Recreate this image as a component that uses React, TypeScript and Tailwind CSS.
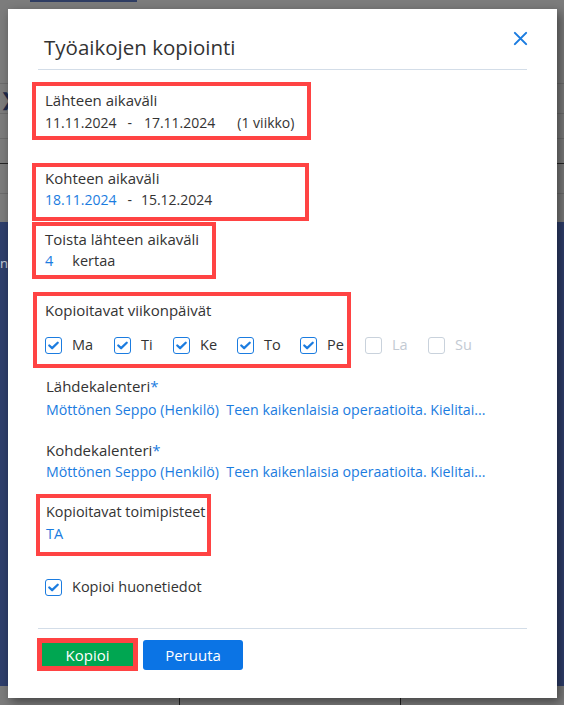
import React from 'react';

const font = "font-['Open_Sans',sans-serif]";

interface DayProps {
  label: string;
  checked: boolean;
  width: string;
}

const Check: React.FC<{ checked: boolean; disabled?: boolean }> = ({ checked, disabled }) => (
  <span
    className={`w-[17px] h-[17px] shrink-0 rounded-[3px] border-[1.5px] flex items-center justify-center bg-white ${
      disabled ? 'border-[#c9d2dc]' : 'border-[#1b7ce0]'
    }`}
  >
    {checked && (
      <svg viewBox="0 0 16 16" className="w-[13px] h-[13px]">
        <path d="M2.8 8 L6.3 11.3 L13.2 4.6" fill="none" stroke="#1b7ce0" strokeWidth="2.8" strokeLinecap="round" strokeLinejoin="round" />
      </svg>
    )}
  </span>
);

const Day: React.FC<DayProps> = ({ label, checked, width }) => (
  <label className={`flex items-center gap-[10px] ${width}`}>
    <Check checked={checked} disabled={!checked} />
    <span className={checked ? 'text-[#333]' : 'text-[#c3cad3]'}>{label}</span>
  </label>
);

// red outline used to highlight fields
const Marked: React.FC<{ className: string; children: React.ReactNode }> = ({ className, children }) => (
  <div className={`border-[4px] border-[#ff4343] box-border ${className}`}>{children}</div>
);

const Label: React.FC<{ children: React.ReactNode; className?: string }> = ({ children, className }) => (
  <div className={`whitespace-nowrap ${className ?? 'text-[15px]'}`}>{children}</div>
);

const App: React.FC = () => {
  const days: DayProps[] = [
    { label: 'Ma', checked: true, width: 'w-[69px]' },
    { label: 'Ti', checked: true, width: 'w-[59px]' },
    { label: 'Ke', checked: true, width: 'w-[64px]' },
    { label: 'To', checked: true, width: 'w-[63px]' },
    { label: 'Pe', checked: true, width: 'w-[65px]' },
    { label: 'La', checked: false, width: 'w-[63px]' },
    { label: 'Su', checked: false, width: 'w-[50px]' },
  ];

  return (
    <div className={`relative w-[564px] h-[705px] overflow-hidden bg-[#7c7c7c] ${font}`}>
      {/* dimmed page behind the dialog */}
      <div className="flex flex-col h-full">
        <div className="relative h-[222px]">
          <div className="ml-[30px] w-[107px] h-[2px] bg-[#2f3d63]" />
          <div className="mt-[81px] h-px bg-[#6c6c6c]" />
          <div className="mt-[29px] h-px bg-[#6c6c6c]" />
          <div className="mt-[24px] h-px bg-[#6c6c6c]" />
          <div className="mt-[24px] h-px bg-[#262626]" />
          <div className="mt-[29px] h-px bg-[#6c6c6c]" />
          <span className="absolute left-[0px] top-[86px] text-[18px] text-[#1e2a4a]">❯</span>
        </div>
        <div className="relative h-[464px] bg-[#2f3f6c]">
          <span className="absolute left-[0px] top-[32px] text-[13px] text-[#c6cad6]">ne</span>
        </div>
        <div className="flex-1 flex">
          <div className="ml-[179px] w-px bg-[#222]" />
          <div className="ml-[220px] w-px bg-[#222]" />
        </div>
      </div>

      {/* dialog */}
      <div className="absolute left-[8px] top-[9px] w-[549px] h-[689px] bg-white shadow-[3px_4px_10px_rgba(0,0,0,0.45)] text-[14.2px] leading-[20px] text-[#333]">
        <div className="flex items-center justify-between pl-[36px] pr-[29px] pt-[15px] h-[60px]">
          <h2 className="text-[20.5px] leading-[28px] text-[#333]">Työaikojen kopiointi</h2>
          <svg viewBox="0 0 16 16" className="w-[15px] h-[15px] mb-[17px]">
            <path d="M2 2 L14 14 M14 2 L2 14" stroke="#1b7ce0" strokeWidth="2.2" strokeLinecap="round" />
          </svg>
        </div>
        <div className="mx-[30px] h-px bg-[#d3dde8]" />

        <div className="pl-[24px] pr-[30px]">
          <Marked className="mt-[12px] w-[279px] h-[58px] pt-[4px] pl-[9px]">
            <Label>Lähteen aikaväli</Label>
            <div className="mt-[3px] flex text-[14px]">
              <span>11.11.2024</span>
              <span className="ml-[11px]">-</span>
              <span className="ml-[12px]">17.11.2024</span>
              <span className="ml-[22px]">(1 viikko)</span>
            </div>
          </Marked>

          <Marked className="mt-[23px] w-[277px] h-[58px] pt-[1px] pl-[9px]">
            <Label>Kohteen aikaväli</Label>
            <div className="mt-[2px] flex text-[14px]">
              <span className="text-[#1b7ce0]">18.11.2024</span>
              <span className="ml-[11px]">-</span>
              <span className="ml-[9px]">15.12.2024</span>
            </div>
          </Marked>

          <Marked className="mt-[1px] w-[184px] h-[57px] pt-[3px] pl-[9px]">
            <Label>Toista lähteen aikaväli</Label>
            <div className="mt-[2px] flex text-[14.5px]">
              <span className="text-[#1b7ce0]">4</span>
              <span className="ml-[19px]">kertaa</span>
            </div>
          </Marked>

          <div className="mt-[13px] relative h-[76px]">
            <Marked className="absolute inset-y-0 left-[1px] w-[318px] pt-[4px] pl-[8px]">
              <Label>Kopioitavat viikonpäivät</Label>
            </Marked>
            <div className="absolute left-[13px] top-[43px] flex items-center text-[14.5px]">
              {days.map((d) => (
                <Day key={d.label} {...d} />
              ))}
            </div>
          </div>

          <div className="pl-[14px] mt-[8px]">
            <Label>
              Lähdekalenteri<span className="text-[#1b7ce0]">*</span>
            </Label>
            <div className="mt-[4px] text-[#1b7ce0] whitespace-pre">
              Möttönen Seppo (Henkilö)  Teen kaikenlaisia operaatioita. Kielitai...
            </div>
            <Label>
              <div className="mt-[20px]">
                Kohdekalenteri<span className="text-[#1b7ce0]">*</span>
              </div>
            </Label>
            <div className="mt-[2px] text-[#1b7ce0] whitespace-pre">
              Möttönen Seppo (Henkilö)  Teen kaikenlaisia operaatioita. Kielitai...
            </div>
          </div>

          <Marked className="mt-[12px] ml-[4px] w-[175px] h-[62px] pt-[4px] pl-[6px]">
            <Label className="text-[14.4px]">Kopioitavat toimipisteet</Label>
            <div className="mt-[2px] text-[#1b7ce0] text-[14.5px]">TA</div>
          </Marked>

          <label className="mt-[21px] ml-[13px] flex items-center gap-[10px] text-[14.5px]">
            <Check checked />
            <span>Kopioi huonetiedot</span>
          </label>
        </div>

        <div className="mx-[30px] mt-[31px] h-px bg-[#d3dde8]" />

        <div className="flex items-center pl-[29px] mt-[9px]">
          <div className="border-[5px] border-[#ff4343] w-[101px] h-[33px] box-border">
            <button className="w-full h-full bg-[#00a651] text-white text-[15px] leading-[20px]">Kopioi</button>
          </div>
          <button className="ml-[5px] w-[100px] h-[30px] rounded-[3px] bg-[#0b74e5] text-white text-[15px] leading-[20px]">
            Peruuta
          </button>
        </div>
      </div>
    </div>
  );
};

export default App;
